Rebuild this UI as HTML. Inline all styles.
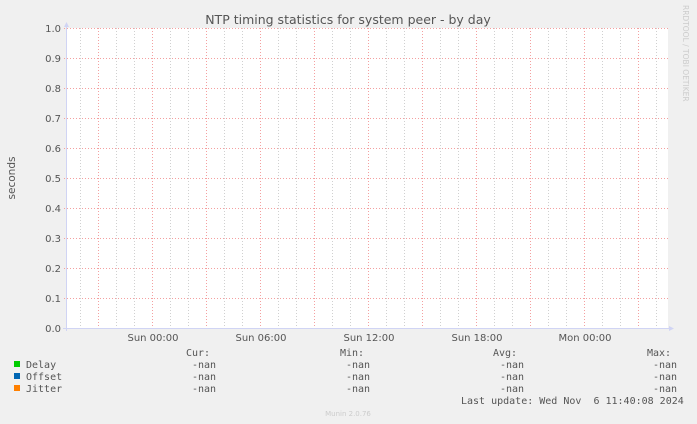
<!DOCTYPE html>
<html><head><style>
html,body{margin:0;padding:0;background:#f0f0f0;}
svg{display:block}
</style></head><body>
<svg width="697" height="424" xmlns="http://www.w3.org/2000/svg">
<rect width="697" height="424" fill="#f0f0f0"/>
<rect x="67" y="28" width="601" height="300" fill="#fff"/>
<g stroke="#d0d0d0" stroke-width="1" stroke-dasharray="1,2">
<line x1="80.5" y1="28" x2="80.5" y2="331"/><line x1="116.5" y1="28" x2="116.5" y2="331"/><line x1="134.5" y1="28" x2="134.5" y2="331"/><line x1="170.5" y1="28" x2="170.5" y2="331"/><line x1="188.5" y1="28" x2="188.5" y2="331"/><line x1="224.5" y1="28" x2="224.5" y2="331"/><line x1="242.5" y1="28" x2="242.5" y2="331"/><line x1="278.5" y1="28" x2="278.5" y2="331"/><line x1="296.5" y1="28" x2="296.5" y2="331"/><line x1="332.5" y1="28" x2="332.5" y2="331"/><line x1="350.5" y1="28" x2="350.5" y2="331"/><line x1="386.5" y1="28" x2="386.5" y2="331"/><line x1="404.5" y1="28" x2="404.5" y2="331"/><line x1="440.5" y1="28" x2="440.5" y2="331"/><line x1="458.5" y1="28" x2="458.5" y2="331"/><line x1="494.5" y1="28" x2="494.5" y2="331"/><line x1="512.5" y1="28" x2="512.5" y2="331"/><line x1="548.5" y1="28" x2="548.5" y2="331"/><line x1="566.5" y1="28" x2="566.5" y2="331"/><line x1="602.5" y1="28" x2="602.5" y2="331"/><line x1="620.5" y1="28" x2="620.5" y2="331"/><line x1="656.5" y1="28" x2="656.5" y2="331"/>
</g>
<g stroke="#f4a0a0" stroke-width="1" stroke-dasharray="1,2">
<line x1="98.5" y1="28" x2="98.5" y2="331"/><line x1="152.5" y1="28" x2="152.5" y2="331"/><line x1="206.5" y1="28" x2="206.5" y2="331"/><line x1="260.5" y1="28" x2="260.5" y2="331"/><line x1="314.5" y1="28" x2="314.5" y2="331"/><line x1="368.5" y1="28" x2="368.5" y2="331"/><line x1="422.5" y1="28" x2="422.5" y2="331"/><line x1="476.5" y1="28" x2="476.5" y2="331"/><line x1="530.5" y1="28" x2="530.5" y2="331"/><line x1="584.5" y1="28" x2="584.5" y2="331"/><line x1="638.5" y1="28" x2="638.5" y2="331"/>
<line x1="64" y1="28.5" x2="669" y2="28.5"/><line x1="64" y1="58.5" x2="669" y2="58.5"/><line x1="64" y1="88.5" x2="669" y2="88.5"/><line x1="64" y1="118.5" x2="669" y2="118.5"/><line x1="64" y1="148.5" x2="669" y2="148.5"/><line x1="64" y1="178.5" x2="669" y2="178.5"/><line x1="64" y1="208.5" x2="669" y2="208.5"/><line x1="64" y1="238.5" x2="669" y2="238.5"/><line x1="64" y1="268.5" x2="669" y2="268.5"/><line x1="64" y1="298.5" x2="669" y2="298.5"/>
</g>
<line x1="66.5" y1="26" x2="66.5" y2="331" stroke="#d0d4f4"/>
<line x1="63" y1="328.5" x2="672" y2="328.5" stroke="#d0d4f4"/>
<path d="M64,27 L66.5,22 L69,27 Z" fill="#d0d4f4"/>
<path d="M669,326 L674,328.5 L669,331 Z" fill="#d0d4f4"/>
<g font-family="DejaVu Sans, Liberation Sans, sans-serif" font-size="10" fill="#555" text-anchor="end">
<text x="61" y="32">1.0</text><text x="61" y="62">0.9</text><text x="61" y="92">0.8</text><text x="61" y="122">0.7</text><text x="61" y="152">0.6</text><text x="61" y="182">0.5</text><text x="61" y="212">0.4</text><text x="61" y="242">0.3</text><text x="61" y="272">0.2</text><text x="61" y="302">0.1</text><text x="61" y="332">0.0</text>
</g>
<g font-family="DejaVu Sans, Liberation Sans, sans-serif" font-size="10" fill="#555" text-anchor="middle">
<text x="153" y="341">Sun 00:00</text><text x="261" y="341">Sun 06:00</text><text x="369" y="341">Sun 12:00</text><text x="477" y="341">Sun 18:00</text><text x="585" y="341">Mon 00:00</text>
</g>
<text x="348" y="24" font-family="DejaVu Sans, Liberation Sans, sans-serif" font-size="12.5" fill="#555" text-anchor="middle">NTP timing statistics for system peer - by day</text>
<text transform="translate(15,178) rotate(-90)" font-family="DejaVu Sans, Liberation Sans, sans-serif" font-size="10.5" fill="#555" text-anchor="middle">seconds</text>
<text transform="translate(683,5) rotate(90)" font-family="DejaVu Sans, Liberation Sans, sans-serif" font-size="7.5" fill="#ccc">RRDTOOL / TOBI OETIKER</text>
<rect x="14" y="361" width="6" height="6" fill="#00cc00"/>
<rect x="14" y="373" width="6" height="6" fill="#0066b3"/>
<rect x="14" y="385" width="6" height="6" fill="#ff8000"/>
<g font-family="DejaVu Sans Mono, Liberation Mono, monospace" font-size="10" fill="#555">
<text x="26" y="368">Delay</text><text x="26" y="380">Offset</text><text x="26" y="392">Jitter</text>
<text x="186" y="356">Cur:</text><text x="340" y="356">Min:</text><text x="493" y="356">Avg:</text><text x="647" y="356">Max:</text>
<text x="192" y="368">-nan</text><text x="346" y="368">-nan</text><text x="500" y="368">-nan</text><text x="653" y="368">-nan</text>
<text x="192" y="380">-nan</text><text x="346" y="380">-nan</text><text x="500" y="380">-nan</text><text x="653" y="380">-nan</text>
<text x="192" y="392">-nan</text><text x="346" y="392">-nan</text><text x="500" y="392">-nan</text><text x="653" y="392">-nan</text>
<text x="461" y="404">Last update: Wed Nov&#160; 6 11:40:08 2024</text>
</g>
<text x="348" y="416" font-family="DejaVu Sans, Liberation Sans, sans-serif" font-size="7" fill="#ccc" text-anchor="middle">Munin 2.0.76</text>
</svg>
</body></html>
